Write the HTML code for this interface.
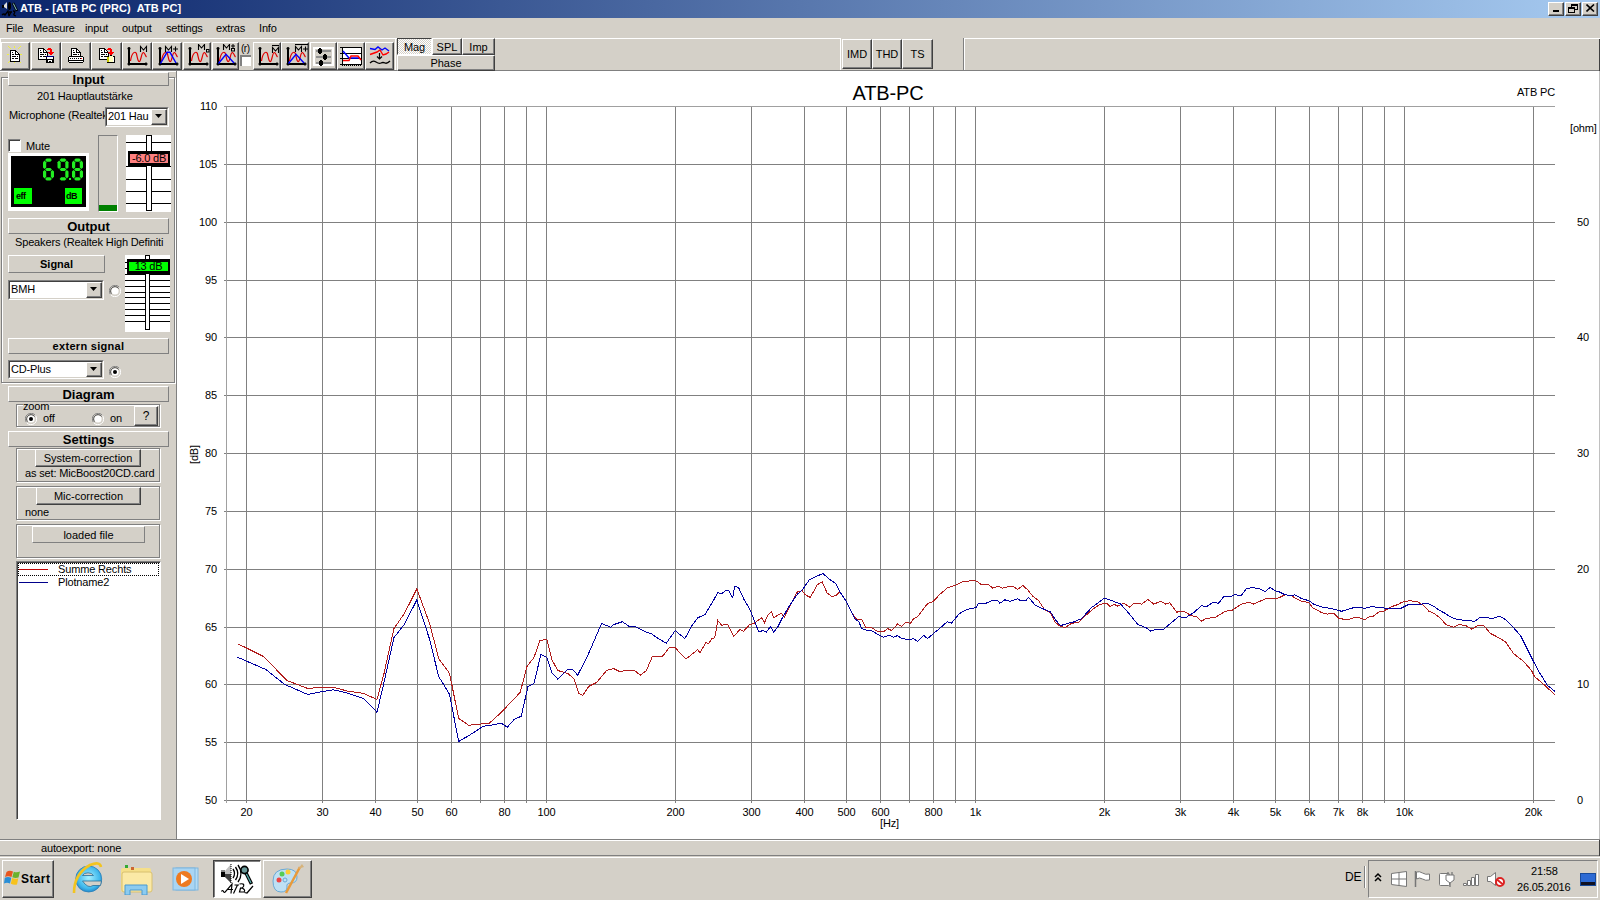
<!DOCTYPE html><html><head><meta charset="utf-8"><style>
*{margin:0;padding:0;box-sizing:border-box}
html,body{width:1600px;height:905px;overflow:hidden;background:#fff;font-family:"Liberation Sans",sans-serif;font-size:11px;color:#000}
div{position:absolute}
.t{white-space:nowrap;line-height:1;letter-spacing:-0.15px}
.btn{background:#d4d0c8;border-top:1px solid #fff;border-left:1px solid #fff;border-right:1px solid #404040;border-bottom:1px solid #404040;box-shadow:inset -1px -1px 0 #808080;display:flex;align-items:center;justify-content:center;white-space:nowrap}
.sunk{border-top:1px solid #808080;border-left:1px solid #808080;border-right:1px solid #fff;border-bottom:1px solid #fff}
.grp{border:1px solid #808080;box-shadow:1px 1px 0 #fff, inset 1px 1px 0 #fff}
.hdr{background:#d4d0c8;border-top:1px solid #fff;border-left:1px solid #fff;border-right:1px solid #808080;border-bottom:1px solid #808080;display:flex;align-items:center;justify-content:center;font-weight:bold;white-space:nowrap}
</style></head><body>

<div style="left:0;top:0;width:1600px;height:18px;background:linear-gradient(to right,#0a246a 0%,#a6caf0 100%)"></div>
<div class="t" style="left:20px;top:3px;color:#fff;font-weight:bold;font-size:11px;letter-spacing:0.1px">ATB - [ATB PC (PRC)&nbsp; ATB PC]</div>
<svg style="position:absolute;left:0;top:0" width="20" height="18"><rect x="2" y="5" width="2" height="3" fill="#000"/><path d="M4 5L7 2V9L4 7z" fill="#ddd"/><ellipse cx="9.5" cy="6" rx="1.6" ry="4" fill="#000"/><path d="M13 3L17 11" stroke="#000" stroke-width="2.6"/><path d="M13.3 3.5L16.5 10" stroke="#8cc" stroke-width="1"/><path d="M2 15q2-2 3 0l3-4l1 5M9 12h3M11 12l-2 4M13 11q3 0 1 3q-1 1 2 2" stroke="#000" stroke-width="1.3" fill="none"/></svg>
<div class="btn" style="left:1548px;top:2px;width:16px;height:14px;box-shadow:inset -1px -1px 0 #808080"></div>
<div class="btn" style="left:1565px;top:2px;width:16px;height:14px;box-shadow:inset -1px -1px 0 #808080"></div>
<div class="btn" style="left:1582px;top:2px;width:16px;height:14px;box-shadow:inset -1px -1px 0 #808080"></div>
<div style="left:1553px;top:10px;width:6px;height:2px;background:#000"></div>
<svg style="position:absolute;left:1568px;top:4px" width="10" height="10"><rect x="3.5" y="0.5" width="6" height="5" fill="none" stroke="#000"/><rect x="3" y="0" width="7" height="2" fill="#000"/><rect x="0.5" y="3.5" width="6" height="5" fill="#d4d0c8" stroke="#000"/><rect x="0" y="3" width="7" height="2" fill="#000"/></svg>
<svg style="position:absolute;left:1586px;top:4px" width="9" height="8"><path d="M0.5 0.5L8 7.5M8 0.5L0.5 7.5" stroke="#000" stroke-width="1.6"/></svg>
<div style="left:0;top:18px;width:1600px;height:21px;background:#d4d0c8"></div>
<div class="t" style="left:6px;top:23px;">File</div>
<div class="t" style="left:33px;top:23px;">Measure</div>
<div class="t" style="left:85px;top:23px;">input</div>
<div class="t" style="left:122px;top:23px;">output</div>
<div class="t" style="left:166px;top:23px;">settings</div>
<div class="t" style="left:216px;top:23px;">extras</div>
<div class="t" style="left:259px;top:23px;">Info</div>
<div style="left:0;top:38px;width:1600px;height:33px;background:#d4d0c8"></div>
<div style="left:0;top:38px;width:841px;height:1px;background:#fff"></div>
<div style="left:840px;top:38px;width:1px;height:32px;background:#fff"></div>
<div style="left:964px;top:38px;width:636px;height:1px;background:#fff"></div>
<div style="left:0;top:70px;width:1600px;height:1px;background:#808080"></div>
<div style="left:0;top:71px;width:1600px;height:1px;background:#fff"></div>
<div style="left:0;top:38px;width:1px;height:32px;background:#fff"></div>
<div class="btn" style="left:1px;top:42px;width:29px;height:28px"></div>
<div class="btn" style="left:31px;top:42px;width:30px;height:28px"></div>
<div class="btn" style="left:61px;top:42px;width:30px;height:28px"></div>
<div class="btn" style="left:91px;top:42px;width:31px;height:28px"></div>
<div class="btn" style="left:122px;top:42px;width:30px;height:28px"></div>
<div class="btn" style="left:152px;top:42px;width:30px;height:28px"></div>
<div class="btn" style="left:183px;top:42px;width:28px;height:28px"></div>
<div class="btn" style="left:212px;top:42px;width:27px;height:28px"></div>
<div class="btn" style="left:253px;top:42px;width:28px;height:28px"></div>
<div class="btn" style="left:281px;top:42px;width:28px;height:28px"></div>
<div class="btn" style="left:310px;top:42px;width:27px;height:28px"></div>
<div class="btn" style="left:337px;top:42px;width:28px;height:28px"></div>
<div class="btn" style="left:365px;top:42px;width:29px;height:28px"></div>
<svg style="position:absolute;left:6px;top:46px" width="16" height="17" shape-rendering="crispEdges"><rect x="2" y="0" width="1" height="1" fill="#f0f040"/><rect x="8" y="0" width="1" height="1" fill="#f0f040"/><rect x="14" y="0" width="1" height="1" fill="#f0f040"/><rect x="3" y="1" width="1" height="1" fill="#f0f040"/><rect x="8" y="1" width="1" height="1" fill="#f0f040"/><rect x="13" y="1" width="1" height="1" fill="#f0f040"/><rect x="4" y="2" width="1" height="1" fill="#f0f040"/><rect x="12" y="2" width="1" height="1" fill="#f0f040"/><rect x="1" y="8" width="2" height="1" fill="#f0f040"/><rect x="14" y="8" width="2" height="1" fill="#f0f040"/><rect x="4" y="14" width="1" height="1" fill="#f0f040"/><rect x="12" y="14" width="1" height="1" fill="#f0f040"/><rect x="3" y="15" width="1" height="1" fill="#f0f040"/><rect x="8" y="15" width="1" height="1" fill="#f0f040"/><rect x="13" y="15" width="1" height="1" fill="#f0f040"/><rect x="2" y="16" width="1" height="1" fill="#f0f040"/><rect x="8" y="16" width="1" height="1" fill="#f0f040"/><rect x="14" y="16" width="1" height="1" fill="#f0f040"/></svg>
<svg style="position:absolute;left:10px;top:50px" width="10" height="12" shape-rendering="crispEdges"><rect x="0" y="0" width="6" height="1" fill="#000"/><rect x="0" y="1" width="1" height="1" fill="#000"/><rect x="1" y="1" width="4" height="1" fill="#fff"/><rect x="5" y="1" width="2" height="1" fill="#000"/><rect x="0" y="2" width="1" height="1" fill="#000"/><rect x="1" y="2" width="1" height="1" fill="#fff"/><rect x="2" y="2" width="1" height="1" fill="#000"/><rect x="3" y="2" width="2" height="1" fill="#fff"/><rect x="5" y="2" width="1" height="1" fill="#000"/><rect x="6" y="2" width="1" height="1" fill="#fff"/><rect x="7" y="2" width="1" height="1" fill="#000"/><rect x="0" y="3" width="1" height="1" fill="#000"/><rect x="1" y="3" width="4" height="1" fill="#fff"/><rect x="5" y="3" width="1" height="1" fill="#000"/><rect x="6" y="3" width="2" height="1" fill="#fff"/><rect x="8" y="3" width="1" height="1" fill="#000"/><rect x="0" y="4" width="1" height="1" fill="#000"/><rect x="1" y="4" width="1" height="1" fill="#fff"/><rect x="2" y="4" width="2" height="1" fill="#000"/><rect x="4" y="4" width="1" height="1" fill="#fff"/><rect x="5" y="4" width="5" height="1" fill="#000"/><rect x="0" y="5" width="1" height="1" fill="#000"/><rect x="1" y="5" width="8" height="1" fill="#fff"/><rect x="9" y="5" width="1" height="1" fill="#000"/><rect x="0" y="6" width="1" height="1" fill="#000"/><rect x="1" y="6" width="1" height="1" fill="#fff"/><rect x="2" y="6" width="4" height="1" fill="#000"/><rect x="6" y="6" width="1" height="1" fill="#fff"/><rect x="7" y="6" width="1" height="1" fill="#000"/><rect x="8" y="6" width="1" height="1" fill="#fff"/><rect x="9" y="6" width="1" height="1" fill="#000"/><rect x="0" y="7" width="1" height="1" fill="#000"/><rect x="1" y="7" width="8" height="1" fill="#fff"/><rect x="9" y="7" width="1" height="1" fill="#000"/><rect x="0" y="8" width="1" height="1" fill="#000"/><rect x="1" y="8" width="1" height="1" fill="#fff"/><rect x="2" y="8" width="2" height="1" fill="#000"/><rect x="4" y="8" width="1" height="1" fill="#fff"/><rect x="5" y="8" width="3" height="1" fill="#000"/><rect x="8" y="8" width="1" height="1" fill="#fff"/><rect x="9" y="8" width="1" height="1" fill="#000"/><rect x="0" y="9" width="1" height="1" fill="#000"/><rect x="1" y="9" width="8" height="1" fill="#fff"/><rect x="9" y="9" width="1" height="1" fill="#000"/><rect x="0" y="10" width="1" height="1" fill="#000"/><rect x="1" y="10" width="8" height="1" fill="#fff"/><rect x="9" y="10" width="1" height="1" fill="#000"/><rect x="0" y="11" width="10" height="1" fill="#000"/></svg>
<svg style="position:absolute;left:38px;top:48px" width="10" height="12" shape-rendering="crispEdges"><rect x="0" y="0" width="6" height="1" fill="#000"/><rect x="0" y="1" width="1" height="1" fill="#000"/><rect x="1" y="1" width="4" height="1" fill="#fff"/><rect x="5" y="1" width="2" height="1" fill="#000"/><rect x="0" y="2" width="1" height="1" fill="#000"/><rect x="1" y="2" width="1" height="1" fill="#fff"/><rect x="2" y="2" width="1" height="1" fill="#000"/><rect x="3" y="2" width="2" height="1" fill="#fff"/><rect x="5" y="2" width="1" height="1" fill="#000"/><rect x="6" y="2" width="1" height="1" fill="#fff"/><rect x="7" y="2" width="1" height="1" fill="#000"/><rect x="0" y="3" width="1" height="1" fill="#000"/><rect x="1" y="3" width="4" height="1" fill="#fff"/><rect x="5" y="3" width="1" height="1" fill="#000"/><rect x="6" y="3" width="2" height="1" fill="#fff"/><rect x="8" y="3" width="1" height="1" fill="#000"/><rect x="0" y="4" width="1" height="1" fill="#000"/><rect x="1" y="4" width="1" height="1" fill="#fff"/><rect x="2" y="4" width="2" height="1" fill="#000"/><rect x="4" y="4" width="1" height="1" fill="#fff"/><rect x="5" y="4" width="5" height="1" fill="#000"/><rect x="0" y="5" width="1" height="1" fill="#000"/><rect x="1" y="5" width="8" height="1" fill="#fff"/><rect x="9" y="5" width="1" height="1" fill="#000"/><rect x="0" y="6" width="1" height="1" fill="#000"/><rect x="1" y="6" width="1" height="1" fill="#fff"/><rect x="2" y="6" width="4" height="1" fill="#000"/><rect x="6" y="6" width="1" height="1" fill="#fff"/><rect x="7" y="6" width="1" height="1" fill="#000"/><rect x="8" y="6" width="1" height="1" fill="#fff"/><rect x="9" y="6" width="1" height="1" fill="#000"/><rect x="0" y="7" width="1" height="1" fill="#000"/><rect x="1" y="7" width="8" height="1" fill="#fff"/><rect x="9" y="7" width="1" height="1" fill="#000"/><rect x="0" y="8" width="1" height="1" fill="#000"/><rect x="1" y="8" width="1" height="1" fill="#fff"/><rect x="2" y="8" width="2" height="1" fill="#000"/><rect x="4" y="8" width="1" height="1" fill="#fff"/><rect x="5" y="8" width="3" height="1" fill="#000"/><rect x="8" y="8" width="1" height="1" fill="#fff"/><rect x="9" y="8" width="1" height="1" fill="#000"/><rect x="0" y="9" width="1" height="1" fill="#000"/><rect x="1" y="9" width="8" height="1" fill="#fff"/><rect x="9" y="9" width="1" height="1" fill="#000"/><rect x="0" y="10" width="1" height="1" fill="#000"/><rect x="1" y="10" width="8" height="1" fill="#fff"/><rect x="9" y="10" width="1" height="1" fill="#000"/><rect x="0" y="11" width="10" height="1" fill="#000"/></svg>
<svg style="position:absolute;left:46px;top:48px" width="8" height="15" shape-rendering="crispEdges"><rect x="2" y="0" width="3" height="1" fill="#ff0000"/><rect x="1" y="1" width="5" height="1" fill="#ff0000"/><rect x="4" y="2" width="2" height="1" fill="#ff0000"/><rect x="4" y="3" width="2" height="1" fill="#ff0000"/><rect x="2" y="4" width="6" height="1" fill="#ff0000"/><rect x="3" y="5" width="4" height="1" fill="#ff0000"/><rect x="4" y="6" width="2" height="1" fill="#ff0000"/><rect x="0" y="8" width="8" height="1" fill="#000080"/><rect x="0" y="9" width="1" height="1" fill="#000"/><rect x="1" y="9" width="6" height="1" fill="#fff"/><rect x="7" y="9" width="1" height="1" fill="#000"/><rect x="0" y="10" width="1" height="1" fill="#000"/><rect x="1" y="10" width="6" height="1" fill="#fff"/><rect x="7" y="10" width="1" height="1" fill="#000"/><rect x="0" y="11" width="8" height="1" fill="#000"/><rect x="0" y="12" width="2" height="1" fill="#000"/><rect x="2" y="12" width="4" height="1" fill="#fff"/><rect x="6" y="12" width="2" height="1" fill="#000"/><rect x="0" y="13" width="2" height="1" fill="#000"/><rect x="2" y="13" width="1" height="1" fill="#fff"/><rect x="3" y="13" width="2" height="1" fill="#000"/><rect x="5" y="13" width="1" height="1" fill="#fff"/><rect x="6" y="13" width="2" height="1" fill="#000"/><rect x="0" y="14" width="8" height="1" fill="#000"/></svg>
<svg style="position:absolute;left:71px;top:48px" width="10" height="9" shape-rendering="crispEdges"><rect x="0" y="0" width="6" height="1" fill="#000"/><rect x="0" y="1" width="1" height="1" fill="#000"/><rect x="1" y="1" width="4" height="1" fill="#fff"/><rect x="5" y="1" width="2" height="1" fill="#000"/><rect x="0" y="2" width="1" height="1" fill="#000"/><rect x="1" y="2" width="1" height="1" fill="#fff"/><rect x="2" y="2" width="1" height="1" fill="#000"/><rect x="3" y="2" width="2" height="1" fill="#fff"/><rect x="5" y="2" width="1" height="1" fill="#000"/><rect x="6" y="2" width="1" height="1" fill="#fff"/><rect x="7" y="2" width="1" height="1" fill="#000"/><rect x="0" y="3" width="1" height="1" fill="#000"/><rect x="1" y="3" width="4" height="1" fill="#fff"/><rect x="5" y="3" width="1" height="1" fill="#000"/><rect x="6" y="3" width="2" height="1" fill="#fff"/><rect x="8" y="3" width="1" height="1" fill="#000"/><rect x="0" y="4" width="1" height="1" fill="#000"/><rect x="1" y="4" width="1" height="1" fill="#fff"/><rect x="2" y="4" width="2" height="1" fill="#000"/><rect x="4" y="4" width="1" height="1" fill="#fff"/><rect x="5" y="4" width="5" height="1" fill="#000"/><rect x="0" y="5" width="1" height="1" fill="#000"/><rect x="1" y="5" width="8" height="1" fill="#fff"/><rect x="9" y="5" width="1" height="1" fill="#000"/><rect x="0" y="6" width="1" height="1" fill="#000"/><rect x="1" y="6" width="1" height="1" fill="#fff"/><rect x="2" y="6" width="4" height="1" fill="#000"/><rect x="6" y="6" width="1" height="1" fill="#fff"/><rect x="7" y="6" width="1" height="1" fill="#000"/><rect x="8" y="6" width="1" height="1" fill="#fff"/><rect x="9" y="6" width="1" height="1" fill="#000"/><rect x="0" y="7" width="1" height="1" fill="#000"/><rect x="1" y="7" width="8" height="1" fill="#fff"/><rect x="9" y="7" width="1" height="1" fill="#000"/><rect x="0" y="8" width="1" height="1" fill="#000"/><rect x="1" y="8" width="8" height="1" fill="#fff"/><rect x="9" y="8" width="1" height="1" fill="#000"/></svg>
<svg style="position:absolute;left:68px;top:56px" width="16" height="7" shape-rendering="crispEdges"><rect x="1" y="0" width="14" height="1" fill="#000"/><rect x="0" y="1" width="1" height="1" fill="#000"/><rect x="1" y="1" width="14" height="1" fill="#fff"/><rect x="15" y="1" width="1" height="1" fill="#000"/><rect x="0" y="2" width="1" height="1" fill="#000"/><rect x="1" y="2" width="1" height="1" fill="#fff"/><rect x="2" y="2" width="1" height="1" fill="#000"/><rect x="3" y="2" width="1" height="1" fill="#fff"/><rect x="4" y="2" width="1" height="1" fill="#000"/><rect x="5" y="2" width="1" height="1" fill="#fff"/><rect x="6" y="2" width="1" height="1" fill="#000"/><rect x="7" y="2" width="1" height="1" fill="#fff"/><rect x="8" y="2" width="1" height="1" fill="#000"/><rect x="9" y="2" width="1" height="1" fill="#fff"/><rect x="10" y="2" width="1" height="1" fill="#000"/><rect x="11" y="2" width="1" height="1" fill="#fff"/><rect x="12" y="2" width="1" height="1" fill="#000"/><rect x="13" y="2" width="1" height="1" fill="#ff0000"/><rect x="14" y="2" width="1" height="1" fill="#fff"/><rect x="15" y="2" width="1" height="1" fill="#000"/><rect x="0" y="3" width="1" height="1" fill="#000"/><rect x="1" y="3" width="14" height="1" fill="#fff"/><rect x="15" y="3" width="1" height="1" fill="#000"/><rect x="0" y="4" width="16" height="1" fill="#000"/><rect x="0" y="5" width="1" height="1" fill="#000"/><rect x="1" y="5" width="14" height="1" fill="#fff"/><rect x="15" y="5" width="1" height="1" fill="#000"/><rect x="1" y="6" width="14" height="1" fill="#000"/></svg>
<svg style="position:absolute;left:99px;top:48px" width="10" height="12" shape-rendering="crispEdges"><rect x="0" y="0" width="6" height="1" fill="#000"/><rect x="0" y="1" width="1" height="1" fill="#000"/><rect x="1" y="1" width="4" height="1" fill="#fff"/><rect x="5" y="1" width="2" height="1" fill="#000"/><rect x="0" y="2" width="1" height="1" fill="#000"/><rect x="1" y="2" width="1" height="1" fill="#fff"/><rect x="2" y="2" width="1" height="1" fill="#000"/><rect x="3" y="2" width="2" height="1" fill="#fff"/><rect x="5" y="2" width="1" height="1" fill="#000"/><rect x="6" y="2" width="1" height="1" fill="#fff"/><rect x="7" y="2" width="1" height="1" fill="#000"/><rect x="0" y="3" width="1" height="1" fill="#000"/><rect x="1" y="3" width="4" height="1" fill="#fff"/><rect x="5" y="3" width="1" height="1" fill="#000"/><rect x="6" y="3" width="2" height="1" fill="#fff"/><rect x="8" y="3" width="1" height="1" fill="#000"/><rect x="0" y="4" width="1" height="1" fill="#000"/><rect x="1" y="4" width="1" height="1" fill="#fff"/><rect x="2" y="4" width="2" height="1" fill="#000"/><rect x="4" y="4" width="1" height="1" fill="#fff"/><rect x="5" y="4" width="5" height="1" fill="#000"/><rect x="0" y="5" width="1" height="1" fill="#000"/><rect x="1" y="5" width="8" height="1" fill="#fff"/><rect x="9" y="5" width="1" height="1" fill="#000"/><rect x="0" y="6" width="1" height="1" fill="#000"/><rect x="1" y="6" width="1" height="1" fill="#fff"/><rect x="2" y="6" width="4" height="1" fill="#000"/><rect x="6" y="6" width="1" height="1" fill="#fff"/><rect x="7" y="6" width="1" height="1" fill="#000"/><rect x="8" y="6" width="1" height="1" fill="#fff"/><rect x="9" y="6" width="1" height="1" fill="#000"/><rect x="0" y="7" width="1" height="1" fill="#000"/><rect x="1" y="7" width="8" height="1" fill="#fff"/><rect x="9" y="7" width="1" height="1" fill="#000"/><rect x="0" y="8" width="1" height="1" fill="#000"/><rect x="1" y="8" width="1" height="1" fill="#fff"/><rect x="2" y="8" width="2" height="1" fill="#000"/><rect x="4" y="8" width="1" height="1" fill="#fff"/><rect x="5" y="8" width="3" height="1" fill="#000"/><rect x="8" y="8" width="1" height="1" fill="#fff"/><rect x="9" y="8" width="1" height="1" fill="#000"/><rect x="0" y="9" width="1" height="1" fill="#000"/><rect x="1" y="9" width="8" height="1" fill="#fff"/><rect x="9" y="9" width="1" height="1" fill="#000"/><rect x="0" y="10" width="1" height="1" fill="#000"/><rect x="1" y="10" width="8" height="1" fill="#fff"/><rect x="9" y="10" width="1" height="1" fill="#000"/><rect x="0" y="11" width="10" height="1" fill="#000"/></svg>
<svg style="position:absolute;left:107px;top:48px" width="8" height="15" shape-rendering="crispEdges"><rect x="1" y="0" width="3" height="1" fill="#ff0000"/><rect x="0" y="1" width="5" height="1" fill="#ff0000"/><rect x="3" y="2" width="2" height="1" fill="#ff0000"/><rect x="3" y="3" width="2" height="1" fill="#ff0000"/><rect x="1" y="4" width="6" height="1" fill="#ff0000"/><rect x="2" y="5" width="4" height="1" fill="#ff0000"/><rect x="3" y="6" width="2" height="1" fill="#ff0000"/><rect x="3" y="7" width="2" height="1" fill="#000"/><rect x="0" y="8" width="2" height="1" fill="#000"/><rect x="2" y="8" width="4" height="1" fill="#ffffc0"/><rect x="6" y="8" width="2" height="1" fill="#000"/><rect x="0" y="9" width="2" height="1" fill="#c8c800"/><rect x="2" y="9" width="4" height="1" fill="#ffffc0"/><rect x="6" y="9" width="1" height="1" fill="#fff"/><rect x="7" y="9" width="1" height="1" fill="#000"/><rect x="0" y="10" width="2" height="1" fill="#c8c800"/><rect x="2" y="10" width="4" height="1" fill="#ffffc0"/><rect x="6" y="10" width="1" height="1" fill="#fff"/><rect x="7" y="10" width="1" height="1" fill="#000"/><rect x="0" y="11" width="2" height="1" fill="#c8c800"/><rect x="2" y="11" width="4" height="1" fill="#ffffc0"/><rect x="6" y="11" width="1" height="1" fill="#fff"/><rect x="7" y="11" width="1" height="1" fill="#000"/><rect x="0" y="12" width="2" height="1" fill="#c8c800"/><rect x="2" y="12" width="4" height="1" fill="#ffffc0"/><rect x="6" y="12" width="1" height="1" fill="#fff"/><rect x="7" y="12" width="1" height="1" fill="#000"/><rect x="0" y="13" width="2" height="1" fill="#c8c800"/><rect x="2" y="13" width="4" height="1" fill="#ffffc0"/><rect x="6" y="13" width="1" height="1" fill="#fff"/><rect x="7" y="13" width="1" height="1" fill="#000"/><rect x="0" y="14" width="8" height="1" fill="#000"/></svg>
<svg style="position:absolute;left:125px;top:44px" width="28" height="24"><path d="M4 4.5V20H21" stroke="#000" stroke-width="2" fill="none"/><path d="M2.5 4.5h3M4 3v3M2.5 20h3M4 18.5v3M19.5 20h3M21 18.5v3" stroke="#000" stroke-width="1.6"/><path d="M5.5 17 C7 7, 11 7, 11.5 10 C12.5 14, 13 18, 14.5 17.5 C16 17, 16.5 8, 18.5 8.5 C20 9, 20.5 12, 21.5 13" stroke="#e00000" stroke-width="1.2" fill="none"/><path d="M15.5 8V2.5L18.5 6L21.5 2.5V8" stroke="#000" fill="none" stroke-width="1.1"/></svg>
<svg style="position:absolute;left:156px;top:44px" width="28" height="24"><path d="M4 4.5V20H21" stroke="#000" stroke-width="2" fill="none"/><path d="M2.5 4.5h3M4 3v3M2.5 20h3M4 18.5v3M19.5 20h3M21 18.5v3" stroke="#000" stroke-width="1.6"/><path d="M5.5 17 C7 7, 11 7, 11.5 10 C12.5 14, 13 18, 14.5 17.5 C16 17, 16.5 8, 18.5 8.5 C20 9, 20.5 12, 21.5 13" stroke="#e00000" stroke-width="1.2" fill="none"/><path d="M4.5 19.5L11 8.3H14L20 19" stroke="#0000ff" stroke-width="1.4" fill="none"/><path d="M9.5 8V2.5L12.5 6L15.5 2.5V8" stroke="#000" fill="none" stroke-width="1.1"/><path d="M17 5h5M19.5 2.5v5" stroke="#000" stroke-width="1.1"/></svg>
<svg style="position:absolute;left:186px;top:44px" width="28" height="24"><path d="M4 4.5V20H21" stroke="#000" stroke-width="2" fill="none"/><path d="M2.5 4.5h3M4 3v3M2.5 20h3M4 18.5v3M19.5 20h3M21 18.5v3" stroke="#000" stroke-width="1.6"/><path d="M5.5 17 C7 7, 11 7, 11.5 10 C12.5 14, 13 18, 14.5 17.5 C16 17, 16.5 8, 18.5 8.5 C20 9, 20.5 12, 21.5 13" stroke="#e00000" stroke-width="1.2" fill="none"/><path d="M12.5 6V0.5L15.5 4L18.5 0.5V6" stroke="#000" fill="none" stroke-width="1.1"/><rect x="20.5" y="5.5" width="2.5" height="2.5" fill="none" stroke="#000"/></svg>
<svg style="position:absolute;left:214px;top:44px" width="28" height="24"><path d="M4 4.5V20H21" stroke="#000" stroke-width="2" fill="none"/><path d="M2.5 4.5h3M4 3v3M2.5 20h3M4 18.5v3M19.5 20h3M21 18.5v3" stroke="#000" stroke-width="1.6"/><path d="M5.5 17 C7 7, 11 7, 11.5 10 C12.5 14, 13 18, 14.5 17.5 C16 17, 16.5 8, 18.5 8.5 C20 9, 20.5 12, 21.5 13" stroke="#e00000" stroke-width="1.2" fill="none"/><path d="M4.5 19.5L12 10.3L20 19" stroke="#0000ff" stroke-width="1.4" fill="none"/><path d="M9.5 6V0.5L12.5 4L15.5 0.5V6" stroke="#000" fill="none" stroke-width="1.1"/></svg>
<svg style="position:absolute;left:230px;top:44px" width="6" height="8"><path d="M1 2h4M3 0v4" stroke="#000"/><rect x="1.5" y="4.5" width="3" height="2.5" fill="none" stroke="#000"/></svg>
<svg style="position:absolute;left:256px;top:44px" width="28" height="24"><path d="M4 4.5V20H21" stroke="#000" stroke-width="2" fill="none"/><path d="M2.5 4.5h3M4 3v3M2.5 20h3M4 18.5v3M19.5 20h3M21 18.5v3" stroke="#000" stroke-width="1.6"/><path d="M5.5 17 C7 7, 11 7, 11.5 10 C12.5 14, 13 18, 14.5 17.5 C16 17, 16.5 8, 18.5 8.5 C20 9, 20.5 12, 21.5 13" stroke="#e00000" stroke-width="1.2" fill="none"/><path d="M16.5 9V3.5L19.5 7L22.5 3.5V9" stroke="#000" fill="none" stroke-width="1.1"/><path d="M16 1.5H23" stroke="#000" stroke-width="1.1"/></svg>
<svg style="position:absolute;left:284px;top:44px" width="28" height="24"><path d="M4 4.5V20H21" stroke="#000" stroke-width="2" fill="none"/><path d="M2.5 4.5h3M4 3v3M2.5 20h3M4 18.5v3M19.5 20h3M21 18.5v3" stroke="#000" stroke-width="1.6"/><path d="M5.5 17 C7 7, 11 7, 11.5 10 C12.5 14, 13 18, 14.5 17.5 C16 17, 16.5 8, 18.5 8.5 C20 9, 20.5 12, 21.5 13" stroke="#e00000" stroke-width="1.2" fill="none"/><path d="M4.5 19.5L12 10.3L20 19" stroke="#0000ff" stroke-width="1.4" fill="none"/><path d="M11.5 8V2.5L14.5 6L17.5 2.5V8" stroke="#000" fill="none" stroke-width="1.1"/><path d="M19 5h5M21.5 2.5v5" stroke="#000" stroke-width="1.1"/><path d="M11 0.5H24" stroke="#000" stroke-width="1.1"/></svg>
<div class="t" style="left:241px;top:44px;font-size:10px;letter-spacing:-0.5px">(r)</div>
<div style="left:240px;top:55px;width:11px;height:11px;background:#fff;border-top:2px solid #808080;border-left:2px solid #808080"></div>
<svg style="position:absolute;left:313px;top:47px" width="21" height="19" shape-rendering="crispEdges"><rect x="1" y="1" width="19" height="17" fill="none" stroke="#fff" stroke-width="2"/><rect x="2" y="2" width="17" height="15" fill="#d4d0c8"/><rect x="3" y="3" width="15" height="2" fill="#909090"/><rect x="3" y="9" width="15" height="2" fill="#909090"/><rect x="3" y="15" width="15" height="2" fill="#909090"/><rect x="6" y="1" width="2" height="6" fill="#000"/><rect x="5" y="2" width="4" height="4" fill="#000"/><rect x="11" y="7" width="2" height="6" fill="#000"/><rect x="10" y="8" width="4" height="4" fill="#000"/><rect x="7" y="13" width="2" height="6" fill="#000"/><rect x="6" y="14" width="4" height="4" fill="#000"/></svg>
<svg style="position:absolute;left:340px;top:46px" width="24" height="22"><rect x="2.5" y="1.5" width="19" height="17" fill="#fff" stroke="#000"/><path d="M2 7.5H21M2 12.5H21" stroke="#000"/><path d="M3 5L9 12H20" stroke="#0000ff" stroke-width="1.5" fill="none"/><path d="M3 14.5H9L11 10H18L21 14" stroke="#ff0000" stroke-width="1.5" fill="none"/><path d="M2 19.5h20" stroke="#000" stroke-dasharray="1 1"/><path d="M0 1.5h2M0 7.5h2M0 12.5h2M0 18.5h2" stroke="#000"/></svg>
<svg style="position:absolute;left:368px;top:45px" width="24" height="22"><path d="M2 3.5L7 4.5L10 2L14 5L17 3L21 6" stroke="#0000ff" stroke-width="1.4" fill="none"/><path d="M2 9.5L9 7L12 5L15 10L18 9L21 7" stroke="#ff0000" stroke-width="1.4" fill="none"/><path d="M11.5 8v6M9 11.5l2.5 2.5l2.5-2.5" stroke="#000" stroke-width="1.2" fill="none"/><path d="M2 18q3-3 6-1t5 1t4 0t5-2" stroke="#000" stroke-width="1.3" fill="none"/></svg>
<div style="left:395px;top:39px;width:1px;height:31px;background:#fff"></div>
<div style="left:397px;top:38px;width:35px;height:17px;border-top:1px solid #404040;border-left:1px solid #404040;border-right:1px solid #fff;border-bottom:1px solid #fff;background-color:#e6e3dd;background-image:repeating-conic-gradient(#d4d0c8 0 25%,#fff 0 50%);background-size:2px 2px"></div>
<div class="t" style="left:404px;top:42px;">Mag</div>
<div class="btn" style="left:432px;top:38px;width:30px;height:17px;"><span style="">SPL</span></div>
<div class="btn" style="left:462px;top:38px;width:33px;height:17px;"><span style="">Imp</span></div>
<div class="btn" style="left:397px;top:55px;width:98px;height:16px;"><span style="">Phase</span></div>
<div class="btn" style="left:842px;top:39px;width:30px;height:30px;"><span style="">IMD</span></div>
<div class="btn" style="left:872px;top:39px;width:30px;height:30px;"><span style="">THD</span></div>
<div class="btn" style="left:902px;top:39px;width:31px;height:30px;"><span style="">TS</span></div>
<div style="left:963px;top:38px;width:1px;height:32px;background:#808080"></div>
<div style="left:964px;top:38px;width:1px;height:32px;background:#fff"></div>
<div style="left:0;top:72px;width:176px;height:767px;background:#d4d0c8"></div>
<div style="left:176px;top:71px;width:1px;height:768px;background:#808080"></div>
<div style="left:2px;top:78px;width:174px;height:306px;border:1px solid #fff"></div>
<div style="left:1px;top:77px;width:174px;height:306px;border:1px solid #808080"></div>
<div class="hdr" style="left:8px;top:72px;width:161px;height:14px;font-size:13px">Input</div>
<div class="t" style="left:37px;top:91px;">201 Hauptlautstärke</div>
<div class="t" style="left:9px;top:110px;">Microphone (Realtek</div>
<div style="left:105px;top:107px;width:63px;height:19px;background:#fff"></div>
<div style="left:105px;top:107px;width:64px;height:20px;background:#fff;border-top:1px solid #808080;border-left:1px solid #808080;border-right:1px solid #fff;border-bottom:1px solid #fff"><div style="left:0;top:0;right:0;bottom:0;border-top:1px solid #404040;border-left:1px solid #404040;border-right:1px solid #d4d0c8;border-bottom:1px solid #d4d0c8"></div></div>
<div class="btn" style="left:151px;top:109px;width:16px;height:16px"></div>
<svg style="position:absolute;left:155px;top:114px" width="8" height="5"><path d="M0 0h7l-3.5 4z" fill="#000"/></svg>
<div class="t" style="left:108px;top:111px;font-size:11px"></div>
<div class="t" style="left:108px;top:111px;">201 Hau</div>
<div style="left:149px;top:109px;width:1px;height:15px;background:#fff"></div>
<div style="left:8px;top:139px;width:13px;height:13px;background:#fff;border-top:1px solid #808080;border-left:1px solid #808080;border-right:1px solid #fff;border-bottom:1px solid #fff;box-shadow:inset 1px 1px 0 #404040"></div>
<div class="t" style="left:26px;top:141px;">Mute</div>
<div style="left:8px;top:153px;width:81px;height:58px;background:#fff"></div>
<div style="left:11px;top:156px;width:75px;height:51px;background:#000"></div>
<svg style="position:absolute;left:11px;top:156px" width="75" height="51"><polygon points="34.050000000000004,4.1 35.650000000000006,2.4999999999999996 39.349999999999994,2.4999999999999996 40.949999999999996,4.1 39.349999999999994,5.699999999999999 35.650000000000006,5.699999999999999" fill="#22ee22"/><polygon points="33.6,4.55 35.2,6.15 35.2,11.450000000000001 33.6,13.05 32.0,11.450000000000001 32.0,6.15" fill="#22ee22"/><polygon points="34.050000000000004,13.5 35.650000000000006,11.9 39.349999999999994,11.9 40.949999999999996,13.5 39.349999999999994,15.1 35.650000000000006,15.1" fill="#22ee22"/><polygon points="33.6,13.95 35.2,15.549999999999999 35.2,20.849999999999998 33.6,22.45 32.0,20.849999999999998 32.0,15.549999999999999" fill="#22ee22"/><polygon points="34.050000000000004,22.9 35.650000000000006,21.299999999999997 39.349999999999994,21.299999999999997 40.949999999999996,22.9 39.349999999999994,24.5 35.650000000000006,24.5" fill="#22ee22"/><polygon points="41.4,13.95 43.0,15.549999999999999 43.0,20.849999999999998 41.4,22.45 39.8,20.849999999999998 39.8,15.549999999999999" fill="#22ee22"/><polygon points="48.550000000000004,4.1 50.150000000000006,2.4999999999999996 53.849999999999994,2.4999999999999996 55.449999999999996,4.1 53.849999999999994,5.699999999999999 50.150000000000006,5.699999999999999" fill="#22ee22"/><polygon points="55.9,4.55 57.5,6.15 57.5,11.450000000000001 55.9,13.05 54.3,11.450000000000001 54.3,6.15" fill="#22ee22"/><polygon points="55.9,13.95 57.5,15.549999999999999 57.5,20.849999999999998 55.9,22.45 54.3,20.849999999999998 54.3,15.549999999999999" fill="#22ee22"/><polygon points="48.550000000000004,22.9 50.150000000000006,21.299999999999997 53.849999999999994,21.299999999999997 55.449999999999996,22.9 53.849999999999994,24.5 50.150000000000006,24.5" fill="#22ee22"/><polygon points="48.1,4.55 49.7,6.15 49.7,11.450000000000001 48.1,13.05 46.5,11.450000000000001 46.5,6.15" fill="#22ee22"/><polygon points="48.550000000000004,13.5 50.150000000000006,11.9 53.849999999999994,11.9 55.449999999999996,13.5 53.849999999999994,15.1 50.150000000000006,15.1" fill="#22ee22"/><polygon points="63.050000000000004,4.1 64.65,2.4999999999999996 68.35000000000001,2.4999999999999996 69.95,4.1 68.35000000000001,5.699999999999999 64.65,5.699999999999999" fill="#22ee22"/><polygon points="70.4,4.55 72.0,6.15 72.0,11.450000000000001 70.4,13.05 68.80000000000001,11.450000000000001 68.80000000000001,6.15" fill="#22ee22"/><polygon points="70.4,13.95 72.0,15.549999999999999 72.0,20.849999999999998 70.4,22.45 68.80000000000001,20.849999999999998 68.80000000000001,15.549999999999999" fill="#22ee22"/><polygon points="63.050000000000004,22.9 64.65,21.299999999999997 68.35000000000001,21.299999999999997 69.95,22.9 68.35000000000001,24.5 64.65,24.5" fill="#22ee22"/><polygon points="62.6,13.95 64.2,15.549999999999999 64.2,20.849999999999998 62.6,22.45 61.0,20.849999999999998 61.0,15.549999999999999" fill="#22ee22"/><polygon points="62.6,4.55 64.2,6.15 64.2,11.450000000000001 62.6,13.05 61.0,11.450000000000001 61.0,6.15" fill="#22ee22"/><polygon points="63.050000000000004,13.5 64.65,11.9 68.35000000000001,11.9 69.95,13.5 68.35000000000001,15.1 64.65,15.1" fill="#22ee22"/><rect x="58" y="22" width="2" height="2" fill="#22ee22"/></svg>
<div style="left:14px;top:188px;width:18px;height:16px;background:#00ff00"></div>
<div class="t" style="left:16px;top:192px;font-size:9px;font-weight:bold;letter-spacing:-0.5px">eff</div>
<div style="left:65px;top:188px;width:17px;height:16px;background:#00ff00"></div>
<div class="t" style="left:66px;top:192px;font-size:9px;font-weight:bold;letter-spacing:-0.5px">dB</div>
<div style="left:98px;top:135px;width:20px;height:77px;background:#d4d0c8;border-top:1px solid #808080;border-left:1px solid #808080;border-right:1px solid #fff;border-bottom:1px solid #fff"></div>
<div style="left:99px;top:205px;width:18px;height:6px;background:#008000"></div>
<div style="left:126px;top:135px;width:45px;height:77px;background:#fff"></div>
<div style="left:126px;top:142px;width:45px;height:1px;background:#000"></div>
<div style="left:126px;top:166px;width:45px;height:1px;background:#000"></div>
<div style="left:126px;top:179px;width:45px;height:1px;background:#000"></div>
<div style="left:126px;top:191px;width:45px;height:1px;background:#000"></div>
<div style="left:126px;top:203px;width:45px;height:1px;background:#000"></div>
<div style="left:146px;top:135px;width:6px;height:76px;background:#fff;border:1px solid #000"></div>
<div style="left:128px;top:151px;width:42px;height:15px;background:#000"></div>
<div style="left:130px;top:154px;width:38px;height:9px;background:#ff8080"></div>
<div class="t" style="left:128px;top:153px;width:42px;text-align:center;font-size:11px;color:#000;letter-spacing:-0.2px">-6.0 dB</div>
<div class="hdr" style="left:8px;top:218px;width:161px;height:16px;font-size:13px">Output</div>
<div class="t" style="left:15px;top:237px;">Speakers (Realtek High Definiti</div>
<div class="hdr" style="left:8px;top:255px;width:97px;height:18px;font-size:11px">Signal</div>
<div style="left:8px;top:280px;width:96px;height:20px;background:#fff;border-top:1px solid #808080;border-left:1px solid #808080;border-right:1px solid #fff;border-bottom:1px solid #fff"><div style="left:0;top:0;right:0;bottom:0;border-top:1px solid #404040;border-left:1px solid #404040;border-right:1px solid #d4d0c8;border-bottom:1px solid #d4d0c8"></div></div>
<div class="btn" style="left:86px;top:282px;width:16px;height:16px"></div>
<svg style="position:absolute;left:90px;top:287px" width="8" height="5"><path d="M0 0h7l-3.5 4z" fill="#000"/></svg>
<div class="t" style="left:11px;top:284px;font-size:11px">BMH</div>
<svg style="position:absolute;left:109px;top:285px" width="12" height="12"><path d="M10.5 2.5A5 5 0 0 0 1.5 9.5" stroke="#808080" fill="none"/><path d="M9.5 3.5A4 4 0 0 0 2.5 8.5" stroke="#404040" fill="none"/><path d="M1.5 9.5A5 5 0 0 0 10.5 2.5" stroke="#fff" fill="none"/><circle cx="6" cy="6" r="3.6" fill="#fff"/></svg>
<div style="left:125px;top:255px;width:45px;height:77px;background:#fff"></div>
<div style="left:125px;top:262px;width:45px;height:1px;background:#000"></div>
<div style="left:125px;top:268px;width:45px;height:1px;background:#000"></div>
<div style="left:125px;top:274px;width:45px;height:1px;background:#000"></div>
<div style="left:125px;top:280px;width:45px;height:1px;background:#000"></div>
<div style="left:125px;top:286px;width:45px;height:1px;background:#000"></div>
<div style="left:125px;top:292px;width:45px;height:1px;background:#000"></div>
<div style="left:125px;top:297px;width:45px;height:1px;background:#000"></div>
<div style="left:125px;top:303px;width:45px;height:1px;background:#000"></div>
<div style="left:125px;top:309px;width:45px;height:1px;background:#000"></div>
<div style="left:125px;top:315px;width:45px;height:1px;background:#000"></div>
<div style="left:125px;top:321px;width:45px;height:1px;background:#000"></div>
<div style="left:145px;top:255px;width:5px;height:75px;background:#fff;border:1px solid #000"></div>
<div style="left:127px;top:259px;width:43px;height:15px;background:#000"></div>
<div style="left:129px;top:262px;width:39px;height:9px;background:#00ff00"></div>
<div class="t" style="left:127px;top:261px;width:43px;text-align:center;font-size:11px;color:#000;letter-spacing:-0.2px">13 dB</div>
<div class="hdr" style="left:8px;top:338px;width:161px;height:16px;font-size:11px"><span style="letter-spacing:0.3px">extern signal</span></div>
<div style="left:8px;top:360px;width:96px;height:19px;background:#fff;border-top:1px solid #808080;border-left:1px solid #808080;border-right:1px solid #fff;border-bottom:1px solid #fff"><div style="left:0;top:0;right:0;bottom:0;border-top:1px solid #404040;border-left:1px solid #404040;border-right:1px solid #d4d0c8;border-bottom:1px solid #d4d0c8"></div></div>
<div class="btn" style="left:86px;top:362px;width:16px;height:15px"></div>
<svg style="position:absolute;left:90px;top:367px" width="8" height="5"><path d="M0 0h7l-3.5 4z" fill="#000"/></svg>
<div class="t" style="left:11px;top:364px;font-size:11px">CD-Plus</div>
<svg style="position:absolute;left:109px;top:366px" width="12" height="12"><path d="M10.5 2.5A5 5 0 0 0 1.5 9.5" stroke="#808080" fill="none"/><path d="M9.5 3.5A4 4 0 0 0 2.5 8.5" stroke="#404040" fill="none"/><path d="M1.5 9.5A5 5 0 0 0 10.5 2.5" stroke="#fff" fill="none"/><circle cx="6" cy="6" r="3.6" fill="#fff"/><circle cx="6" cy="6" r="2" fill="#000"/></svg>
<div class="hdr" style="left:8px;top:386px;width:161px;height:16px;font-size:13px">Diagram</div>
<div style="left:17px;top:405px;width:144px;height:23px;border:1px solid #fff"></div>
<div style="left:16px;top:404px;width:144px;height:23px;border:1px solid #808080"></div>
<div style="left:23px;top:403px;width:27px;height:4px;background:#d4d0c8"></div>
<div class="t" style="left:23px;top:401px;">zoom</div>
<svg style="position:absolute;left:25px;top:413px" width="12" height="12"><path d="M10.5 2.5A5 5 0 0 0 1.5 9.5" stroke="#808080" fill="none"/><path d="M9.5 3.5A4 4 0 0 0 2.5 8.5" stroke="#404040" fill="none"/><path d="M1.5 9.5A5 5 0 0 0 10.5 2.5" stroke="#fff" fill="none"/><circle cx="6" cy="6" r="3.6" fill="#fff"/><circle cx="6" cy="6" r="2" fill="#000"/></svg>
<div class="t" style="left:43px;top:413px;">off</div>
<svg style="position:absolute;left:92px;top:413px" width="12" height="12"><path d="M10.5 2.5A5 5 0 0 0 1.5 9.5" stroke="#808080" fill="none"/><path d="M9.5 3.5A4 4 0 0 0 2.5 8.5" stroke="#404040" fill="none"/><path d="M1.5 9.5A5 5 0 0 0 10.5 2.5" stroke="#fff" fill="none"/><circle cx="6" cy="6" r="3.6" fill="#fff"/></svg>
<div class="t" style="left:110px;top:413px;">on</div>
<div class="btn" style="left:134px;top:406px;width:24px;height:20px;font-size:12px"><span style="">?</span></div>
<div class="hdr" style="left:8px;top:431px;width:161px;height:16px;font-size:13px">Settings</div>
<div style="left:17px;top:449px;width:144px;height:34px;border:1px solid #fff"></div>
<div style="left:16px;top:448px;width:144px;height:34px;border:1px solid #808080"></div>
<div class="btn" style="left:35px;top:449px;width:106px;height:18px;"><span style="">System-correction</span></div>
<div class="t" style="left:25px;top:468px;">as set: MicBoost20CD.card</div>
<div style="left:17px;top:487px;width:144px;height:34px;border:1px solid #fff"></div>
<div style="left:16px;top:486px;width:144px;height:34px;border:1px solid #808080"></div>
<div class="btn" style="left:36px;top:487px;width:105px;height:18px;"><span style="">Mic-correction</span></div>
<div class="t" style="left:25px;top:507px;">none</div>
<div style="left:17px;top:525px;width:144px;height:34px;border:1px solid #fff"></div>
<div style="left:16px;top:524px;width:144px;height:34px;border:1px solid #808080"></div>
<div class="btn" style="left:32px;top:526px;width:113px;height:17px;border-right:1px solid #808080;border-bottom:1px solid #808080;box-shadow:none"><span style="">loaded file</span></div>
<div style="left:16px;top:561px;width:145px;height:259px;background:#fff;border-top:1px solid #808080;border-left:1px solid #808080;border-right:1px solid #fff;border-bottom:1px solid #fff;box-shadow:inset 1px 1px 0 #404040"></div>
<div style="left:18px;top:563px;width:141px;height:13px;border:1px dotted #000"></div>
<div style="left:19px;top:569px;width:29px;height:1px;background:#c00000"></div>
<div class="t" style="left:58px;top:564px;">Summe Rechts</div>
<div style="left:19px;top:582px;width:29px;height:1px;background:#00008b"></div>
<div class="t" style="left:58px;top:577px;">Plotname2</div>
<div style="left:0;top:839px;width:1600px;height:18px;background:#d4d0c8;border-top:1px solid #808080"></div>
<div style="left:0;top:840px;width:1600px;height:1px;background:#fff"></div>
<div style="left:0;top:855px;width:1600px;height:1px;background:#808080"></div>
<div class="t" style="left:41px;top:843px;">autoexport: none</div>
<div style="left:1599px;top:71px;width:1px;height:768px;background:#c0c0c0"></div>
<div style="left:1599px;top:840px;width:1px;height:16px;background:#404040"></div>
<div style="left:1599px;top:39px;width:1px;height:32px;background:#404040"></div>
<div style="left:0;top:856px;width:1600px;height:44px;background:#d4d0c8;border-top:1px solid #d4d0c8"></div>
<div style="left:0;top:857px;width:1600px;height:1px;background:#fff"></div>
<div style="left:0;top:900px;width:1600px;height:5px;background:#fff"></div>
<div class="btn" style="left:2px;top:860px;width:52px;height:38px;"><span style=""></span></div>
<svg style="position:absolute;left:3px;top:869px" width="18" height="18"><path d="M3.5 3Q6 1 10 2.5L8.5 8Q5 6.5 2 8z" fill="#e8561f"/><path d="M10.8 2.8Q14 4 17 2.5L15.5 8.5Q12.5 9.5 9.3 8.3z" fill="#6bb22e"/><path d="M1.8 8.8Q5 7.3 8.3 8.8L7 14.5Q4 13 1 14.5z" fill="#2a8ed6"/><path d="M9.1 9.1Q12.5 10.3 15.3 9.2L14 15.5Q11 16.3 7.8 14.8z" fill="#f7c21c"/></svg>
<div class="t" style="left:21px;top:873px;font-weight:bold;font-size:12px;letter-spacing:0.4px">Start</div>
<svg style="position:absolute;left:66px;top:858px" width="40" height="40"><defs><radialGradient id="ieg" cx="0.5" cy="0.45" r="0.6"><stop offset="0" stop-color="#a6f0ff"/><stop offset="0.7" stop-color="#3fb8ec"/><stop offset="1" stop-color="#1c78c0"/></radialGradient></defs><circle cx="22.7" cy="21" r="13" fill="url(#ieg)" stroke="#2a7fb8" stroke-width="0.8"/><path d="M16.5 17.5A6 4.5 0 0 1 27.5 17.5Z" fill="#d4d0c8" stroke="#2a6f98" stroke-width="0.8"/><path d="M16.5 23H35.5L34.5 27.5H27Q22 31 16.5 23Z" fill="#d4d0c8" stroke="#2a6f98" stroke-width="0.8"/><path d="M8 35Q8 16 24 7Q34 3 35 9" stroke="#f2c420" stroke-width="2.6" fill="none"/></svg>
<svg style="position:absolute;left:120px;top:865px" width="34" height="30"><rect x="1" y="3" width="30" height="24" rx="2" fill="#f5df8a"/><rect x="2" y="7" width="30" height="20" rx="2" fill="#fbe9a6" stroke="#d8c070"/><rect x="5" y="0" width="3" height="3" fill="#3a3"/><rect x="11" y="2" width="3" height="3" fill="#c63"/><path d="M5 30v-10h22v10h-5v-5h-12v5z" fill="#8ccbf0" stroke="#4b9ad0"/></svg>
<svg style="position:absolute;left:172px;top:867px" width="30" height="26"><rect x="4" y="1" width="22" height="22" fill="#b4dcf5" stroke="#7fb6de"/><rect x="1" y="1" width="22" height="22" fill="#a9d5f3" stroke="#7fb6de"/><circle cx="12" cy="12" r="8" fill="#ee7a20"/><path d="M9 7v10l8-5z" fill="#fff"/></svg>
<div style="left:213px;top:860px;width:48px;height:38px;background:#fff;border-top:1px solid #404040;border-left:1px solid #404040;border-right:1px solid #fff;border-bottom:1px solid #fff;box-shadow:inset 1px 1px 0 #808080"></div>
<svg style="position:absolute;left:212px;top:858px" width="50" height="40"><rect x="9" y="12" width="4" height="7" fill="#000"/><rect x="9" y="12" width="4" height="2" fill="#888"/><path d="M13 13L19 6V25L13 19z" fill="#c0c0c0"/><path d="M13 16H19V25L13 19z" fill="#404040"/><path d="M19 6V25" stroke="#000" stroke-dasharray="1 1"/><path d="M21 11Q24 15.5 21 20M23.5 9Q28 15.5 23.5 22M26 7Q32 15.5 26 24" stroke="#000" fill="none" stroke-width="1.4"/><path d="M34 15L39.5 26" stroke="#000" stroke-width="3.5"/><path d="M34.2 15.5L39 25" stroke="#5aa" stroke-width="1.3"/><circle cx="32.5" cy="12" r="3.6" fill="#6a9a9a" stroke="#000" stroke-width="1.6"/><path d="M9.5 33.5q1-2 2 0t2 0L20 26L19 35.5M15.5 31.5H21M22.5 27H27M25.5 27L21.5 35.5M27.5 26Q33 25 31.5 28.5Q30 30.5 28.5 30L27.5 34H32Q34 32 30 30M32.5 34.5L35 35L41 28" stroke="#000" stroke-width="1.2" fill="none"/></svg>
<div class="btn" style="left:263px;top:860px;width:49px;height:38px;"><span style=""></span></div>
<svg style="position:absolute;left:270px;top:863px" width="36" height="32"><path d="M3 18q0-12 14-12q10 0 10 8q0 6-6 6q-5 0-4 4q0 5-6 5q-8 0-8-11z" fill="#bfe0f3" stroke="#6aa9d6"/><circle cx="9" cy="17" r="2.5" fill="#e44"/><circle cx="12" cy="11" r="2.5" fill="#5c5"/><circle cx="18" cy="9" r="2.5" fill="#fc3"/><circle cx="15" cy="17" r="2" fill="none" stroke="#6aa9d6"/><path d="M16 30L30 4" stroke="#e89a3a" stroke-width="2.5"/><path d="M28 6l4-5l2 3z" fill="#d7b37b"/></svg>
<div class="t" style="left:1345px;top:871px;font-size:12px">DE</div>
<div style="left:1364px;top:866px;width:1px;height:22px;background:#808080"></div>
<div style="left:1365px;top:866px;width:1px;height:22px;background:#fff"></div>
<div style="left:1368px;top:860px;width:230px;height:38px;border-top:1px solid #808080;border-left:1px solid #808080;border-right:1px solid #fff;border-bottom:1px solid #fff"></div>
<svg style="position:absolute;left:1373px;top:872px" width="10" height="10"><path d="M2 5l3-3l3 3M2 9l3-3l3 3" stroke="#000" stroke-width="1.5" fill="none"/></svg>
<svg style="position:absolute;left:1390px;top:870px" width="18" height="18"><path d="M1.5 3.5l15-2v15l-15-2z" fill="#fff" stroke="#777"/><path d="M9 2.5v13.5M1.5 9h15" stroke="#777"/></svg>
<svg style="position:absolute;left:1414px;top:870px" width="18" height="18"><path d="M1.5 1v16" stroke="#777" stroke-width="1.5"/><path d="M2.5 2q3-1 6 1t7 1v6q-4 1-7-1t-6 0z" fill="#fff" stroke="#777"/></svg>
<svg style="position:absolute;left:1438px;top:870px" width="18" height="18"><rect x="1.5" y="3.5" width="10" height="12" fill="#fff" stroke="#777" rx="1"/><path d="M8 5h8v5l-4 3l-4-3z" fill="#fff" stroke="#777"/><path d="M10 2v3M14 2v3M12 13v4" stroke="#777" stroke-width="1.3"/></svg>
<svg style="position:absolute;left:1462px;top:870px" width="18" height="18"><path d="M1.5 15.5h3v-2h-3zM5.5 15.5h3v-5h-3zM9.5 15.5h3v-8h-3zM13.5 15.5h3v-11h-3z" fill="#fff" stroke="#777"/></svg>
<svg style="position:absolute;left:1486px;top:870px" width="20" height="18"><path d="M1.5 6.5h3l5-4v13l-5-4h-3z" fill="#fff" stroke="#777"/><circle cx="14" cy="12" r="4" fill="#fff" stroke="#d22" stroke-width="2"/><path d="M11 9.5l6 5" stroke="#d22" stroke-width="2"/></svg>
<div class="t" style="left:1531px;top:866px;font-size:11px">21:58</div>
<div class="t" style="left:1517px;top:882px;font-size:11px">26.05.2016</div>
<svg style="position:absolute;left:1580px;top:873px" width="16" height="14"><rect x="0.5" y="0.5" width="15" height="12" fill="#2d6ad4" stroke="#184a9a"/><rect x="1" y="9" width="14" height="3" fill="#112"/></svg>
<div style="left:177px;top:72px;width:1421px;height:767px;background:#fff"></div>
<svg style="position:absolute;left:0;top:0" width="1600" height="905" shape-rendering="crispEdges"><rect x="246" y="106" width="1" height="697" fill="#808080"/><rect x="322" y="106" width="1" height="697" fill="#808080"/><rect x="375" y="106" width="1" height="697" fill="#808080"/><rect x="417" y="106" width="1" height="697" fill="#808080"/><rect x="451" y="106" width="1" height="697" fill="#808080"/><rect x="480" y="106" width="1" height="697" fill="#808080"/><rect x="504" y="106" width="1" height="697" fill="#808080"/><rect x="526" y="106" width="1" height="697" fill="#808080"/><rect x="546" y="106" width="1" height="697" fill="#808080"/><rect x="675" y="106" width="1" height="697" fill="#808080"/><rect x="751" y="106" width="1" height="697" fill="#808080"/><rect x="804" y="106" width="1" height="697" fill="#808080"/><rect x="846" y="106" width="1" height="697" fill="#808080"/><rect x="880" y="106" width="1" height="697" fill="#808080"/><rect x="909" y="106" width="1" height="697" fill="#808080"/><rect x="933" y="106" width="1" height="697" fill="#808080"/><rect x="955" y="106" width="1" height="697" fill="#808080"/><rect x="975" y="106" width="1" height="697" fill="#808080"/><rect x="1104" y="106" width="1" height="697" fill="#808080"/><rect x="1180" y="106" width="1" height="697" fill="#808080"/><rect x="1233" y="106" width="1" height="697" fill="#808080"/><rect x="1275" y="106" width="1" height="697" fill="#808080"/><rect x="1309" y="106" width="1" height="697" fill="#808080"/><rect x="1338" y="106" width="1" height="697" fill="#808080"/><rect x="1362" y="106" width="1" height="697" fill="#808080"/><rect x="1384" y="106" width="1" height="697" fill="#808080"/><rect x="1404" y="106" width="1" height="697" fill="#808080"/><rect x="1533" y="106" width="1" height="697" fill="#808080"/><rect x="224" y="800" width="1331" height="1" fill="#808080"/><rect x="224" y="742" width="1331" height="1" fill="#808080"/><rect x="224" y="684" width="1331" height="1" fill="#808080"/><rect x="224" y="627" width="1331" height="1" fill="#808080"/><rect x="224" y="569" width="1331" height="1" fill="#808080"/><rect x="224" y="511" width="1331" height="1" fill="#808080"/><rect x="224" y="453" width="1331" height="1" fill="#808080"/><rect x="224" y="395" width="1331" height="1" fill="#808080"/><rect x="224" y="337" width="1331" height="1" fill="#808080"/><rect x="224" y="280" width="1331" height="1" fill="#808080"/><rect x="224" y="222" width="1331" height="1" fill="#808080"/><rect x="224" y="164" width="1331" height="1" fill="#808080"/><rect x="224" y="106" width="1331" height="1" fill="#a0a0a0"/><rect x="226" y="106" width="1" height="697" fill="#a0a0a0"/></svg>
<div class="t" style="left:176px;top:795px;width:41px;text-align:right">50</div>
<div class="t" style="left:176px;top:737px;width:41px;text-align:right">55</div>
<div class="t" style="left:176px;top:679px;width:41px;text-align:right">60</div>
<div class="t" style="left:176px;top:622px;width:41px;text-align:right">65</div>
<div class="t" style="left:176px;top:564px;width:41px;text-align:right">70</div>
<div class="t" style="left:176px;top:506px;width:41px;text-align:right">75</div>
<div class="t" style="left:176px;top:448px;width:41px;text-align:right">80</div>
<div class="t" style="left:176px;top:390px;width:41px;text-align:right">85</div>
<div class="t" style="left:176px;top:332px;width:41px;text-align:right">90</div>
<div class="t" style="left:176px;top:275px;width:41px;text-align:right">95</div>
<div class="t" style="left:176px;top:217px;width:41px;text-align:right">100</div>
<div class="t" style="left:176px;top:159px;width:41px;text-align:right">105</div>
<div class="t" style="left:176px;top:101px;width:41px;text-align:right">110</div>
<div class="t" style="left:216px;top:807px;width:61px;text-align:center">20</div>
<div class="t" style="left:292px;top:807px;width:61px;text-align:center">30</div>
<div class="t" style="left:345px;top:807px;width:61px;text-align:center">40</div>
<div class="t" style="left:387px;top:807px;width:61px;text-align:center">50</div>
<div class="t" style="left:421px;top:807px;width:61px;text-align:center">60</div>
<div class="t" style="left:474px;top:807px;width:61px;text-align:center">80</div>
<div class="t" style="left:516px;top:807px;width:61px;text-align:center">100</div>
<div class="t" style="left:645px;top:807px;width:61px;text-align:center">200</div>
<div class="t" style="left:721px;top:807px;width:61px;text-align:center">300</div>
<div class="t" style="left:774px;top:807px;width:61px;text-align:center">400</div>
<div class="t" style="left:816px;top:807px;width:61px;text-align:center">500</div>
<div class="t" style="left:850px;top:807px;width:61px;text-align:center">600</div>
<div class="t" style="left:903px;top:807px;width:61px;text-align:center">800</div>
<div class="t" style="left:945px;top:807px;width:61px;text-align:center">1k</div>
<div class="t" style="left:1074px;top:807px;width:61px;text-align:center">2k</div>
<div class="t" style="left:1150px;top:807px;width:61px;text-align:center">3k</div>
<div class="t" style="left:1203px;top:807px;width:61px;text-align:center">4k</div>
<div class="t" style="left:1245px;top:807px;width:61px;text-align:center">5k</div>
<div class="t" style="left:1279px;top:807px;width:61px;text-align:center">6k</div>
<div class="t" style="left:1308px;top:807px;width:61px;text-align:center">7k</div>
<div class="t" style="left:1332px;top:807px;width:61px;text-align:center">8k</div>
<div class="t" style="left:1374px;top:807px;width:61px;text-align:center">10k</div>
<div class="t" style="left:1503px;top:807px;width:61px;text-align:center">20k</div>
<div class="t" style="left:1577px;top:795px">0</div>
<div class="t" style="left:1577px;top:679px">10</div>
<div class="t" style="left:1577px;top:564px">20</div>
<div class="t" style="left:1577px;top:448px">30</div>
<div class="t" style="left:1577px;top:332px">40</div>
<div class="t" style="left:1577px;top:217px">50</div>
<div class="t" style="left:1570px;top:123px;">[ohm]</div>
<div class="t" style="left:1455px;top:87px;width:100px;text-align:right">ATB PC</div>
<div class="t" style="left:788px;top:83px;width:200px;text-align:center;font-size:20px">ATB-PC</div>
<div class="t" style="left:880px;top:818px;">[Hz]</div>
<div class="t" style="left:177px;top:450px;transform:rotate(-90deg);transform-origin:0 0;top:464px;left:189px">[dB]</div>
<svg style="position:absolute;left:0;top:0" width="1600" height="905"><polyline points="237.5,643.6 263.8,656.6 286.7,680.4 307.6,688.4 321.5,687.4 333.5,687.4 347.4,691.0 363.3,693.4 377.0,699.4 384.0,673.5 393.9,628.7 404.8,612.8 416.8,588.9 429.7,623.7 438.7,658.6 449.6,673.5 458.6,718.3 468.5,725.2 479.5,724.2 489.4,723.2 501.3,712.3 520.2,692.4 527.0,666.5 533.9,657.6 539.9,640.6 546.9,639.3 551.8,659.6 557.8,670.5 567.8,673.5 573.7,678.5 578.7,693.4 582.7,695.4 588.7,686.4 596.6,682.4 606.6,670.5 613.5,668.5 619.5,671.5 627.5,670.5 634.4,670.5 640.4,675.1 646.4,670.5 652.3,656.6 662.3,656.6 669.3,647.6 675.0,647.5 685.9,659.1 697.9,649.5 699.9,653.1 705.8,642.5 708.8,643.5 711.8,638.6 714.8,637.6 717.8,620.6 721.7,625.2 727.7,624.0 733.7,636.6 739.7,629.6 743.6,631.2 749.6,624.6 753.6,623.6 761.5,617.7 764.5,622.6 767.5,615.7 771.5,611.7 773.5,617.7 781.4,613.3 784.4,617.3 789.4,606.7 797.4,591.8 802.3,590.8 805.3,594.8 810.3,597.4 817.3,584.8 822.2,581.8 827.0,592.8 831.9,596.8 835.9,595.4 839.9,591.8 845.9,600.7 851.8,612.7 856.8,619.7 861.8,619.3 865.8,627.6 871.7,627.6 877.7,631.6 883.7,631.6 887.7,628.6 891.6,630.6 897.6,624.0 901.6,626.6 905.6,622.6 910.5,623.2 913.5,618.7 917.5,616.7 927.5,603.7 933.4,601.3 939.4,594.8 947.4,587.8 955.3,585.4 963.3,581.4 971.2,580.8 976.0,580.8 980.9,584.2 988.9,584.8 992.9,588.2 997.9,586.2 1002.8,588.2 1008.8,586.4 1013.8,586.8 1017.8,589.4 1022.7,585.4 1027.7,589.8 1032.7,596.2 1038.7,600.7 1044.6,609.7 1050.6,612.7 1054.6,621.6 1059.6,626.0 1065.5,627.6 1071.5,623.2 1078.5,622.6 1085.4,615.7 1093.4,608.7 1100.3,604.1 1107.3,603.7 1110.3,606.7 1114.3,604.1 1117.3,606.1 1124.0,603.3 1130.0,607.3 1132.9,604.1 1137.9,603.3 1141.9,604.1 1147.9,599.4 1153.8,604.1 1160.8,601.3 1165.8,604.1 1169.8,602.7 1176.7,612.1 1183.7,611.3 1191.6,615.7 1196.6,616.7 1201.6,621.2 1205.6,618.7 1215.5,617.3 1225.5,611.3 1232.4,610.1 1241.4,604.1 1249.4,602.1 1253.3,604.1 1261.3,600.7 1267.3,598.2 1278.0,598.2 1284.9,594.8 1290.9,595.4 1299.9,600.7 1308.8,602.7 1312.8,607.7 1321.7,612.7 1327.7,614.1 1333.7,613.3 1338.7,618.1 1346.6,620.0 1353.6,617.7 1361.5,618.1 1364.5,619.7 1369.5,616.7 1373.5,616.1 1378.5,612.1 1383.4,611.3 1391.4,606.7 1397.4,604.7 1402.3,602.1 1409.3,600.7 1417.3,601.7 1424.0,605.7 1429.0,611.3 1433.9,613.3 1439.9,617.7 1445.9,624.6 1453.8,627.2 1458.8,624.6 1465.8,625.6 1471.7,629.2 1478.7,625.2 1483.7,625.6 1490.6,633.6 1495.6,636.0 1505.6,641.9 1513.5,653.5 1523.5,661.4 1531.4,670.4 1534.4,676.4 1541.4,682.3 1549.4,689.7 1555.3,695.3" fill="none" stroke="#b01c1c" stroke-width="1" shape-rendering="crispEdges"/><polyline points="237.5,657.2 265.8,669.5 284.7,684.4 307.6,694.4 321.5,691.8 333.5,689.8 347.4,693.0 363.3,698.4 377.0,712.3 384.0,682.4 393.9,637.7 404.8,623.7 416.8,599.9 429.7,639.7 438.7,676.5 449.6,694.4 458.6,741.5 469.5,735.2 483.4,726.2 493.4,724.8 501.3,723.2 507.3,727.2 514.3,719.3 521.2,716.3 528.0,686.4 533.9,683.4 540.9,654.6 546.9,657.6 551.8,672.5 557.8,679.1 567.8,669.5 572.7,669.5 577.7,675.1 587.7,655.6 594.6,639.7 601.6,623.3 610.5,627.3 613.5,624.7 622.5,621.7 629.5,626.7 635.4,626.7 645.4,631.7 651.3,633.7 655.3,636.7 666.3,643.2 675.2,630.6 684.9,638.6 691.9,625.6 697.9,617.7 704.8,614.7 709.8,606.7 717.8,592.8 721.7,593.8 725.7,590.4 728.7,590.8 732.7,597.8 734.7,586.2 738.7,587.8 744.6,600.7 749.6,608.7 753.6,618.7 758.6,631.6 763.5,630.6 766.5,632.0 770.5,626.6 773.5,632.0 777.5,627.6 781.4,619.7 789.4,605.7 797.4,594.2 802.3,589.8 809.3,579.9 817.3,575.9 823.0,573.5 829.0,578.9 835.9,583.8 839.9,591.8 845.9,600.7 854.8,618.7 858.8,621.6 861.8,628.6 867.8,630.6 871.7,630.6 879.7,635.6 883.7,637.2 889.7,635.2 893.6,637.2 897.6,635.6 901.6,638.6 909.6,639.6 913.5,638.6 917.5,641.5 923.5,635.2 927.5,638.6 933.4,633.6 939.4,628.6 947.4,621.6 951.3,623.2 959.3,613.7 967.3,609.3 976.0,607.7 978.0,603.7 985.9,603.3 991.9,600.7 997.9,600.7 999.9,603.3 1004.8,599.8 1009.8,601.3 1017.8,598.8 1020.7,600.7 1025.7,600.7 1028.7,597.4 1034.7,604.7 1042.6,608.7 1045.6,609.7 1050.6,612.1 1055.6,620.0 1060.5,625.6 1068.5,623.2 1073.5,622.0 1081.4,618.7 1091.4,607.7 1097.4,603.3 1104.3,598.2 1109.3,599.8 1117.3,602.7 1120.0,603.7 1123.0,606.7 1130.0,614.7 1137.9,624.6 1145.9,627.6 1150.8,631.2 1155.8,629.2 1162.8,630.0 1167.8,625.6 1178.7,616.7 1185.7,617.7 1193.6,612.7 1201.6,605.7 1206.6,606.7 1213.5,602.1 1218.5,603.3 1223.5,596.8 1231.4,596.2 1234.4,594.8 1241.4,595.4 1246.4,588.8 1252.3,587.4 1259.3,588.8 1265.3,591.4 1270.2,587.4 1275.2,590.8 1279.0,591.8 1283.9,594.2 1289.9,595.8 1294.9,594.8 1300.8,598.2 1308.8,600.7 1313.8,604.1 1323.7,607.7 1329.7,608.1 1341.6,611.3 1353.6,607.7 1365.5,608.1 1371.5,606.7 1381.4,607.7 1389.4,608.7 1401.3,608.1 1409.3,604.1 1417.3,604.7 1427.0,603.3 1432.9,605.7 1437.9,609.3 1444.9,613.3 1451.8,617.7 1456.8,619.3 1465.8,620.6 1474.7,621.2 1479.7,617.7 1485.7,617.3 1491.6,618.7 1499.6,616.1 1505.6,619.7 1513.5,627.6 1520.5,635.6 1527.5,649.5 1533.4,661.4 1539.4,672.4 1547.4,685.3 1555.3,691.7" fill="none" stroke="#0000a0" stroke-width="1" shape-rendering="crispEdges"/></svg>
</body></html>
